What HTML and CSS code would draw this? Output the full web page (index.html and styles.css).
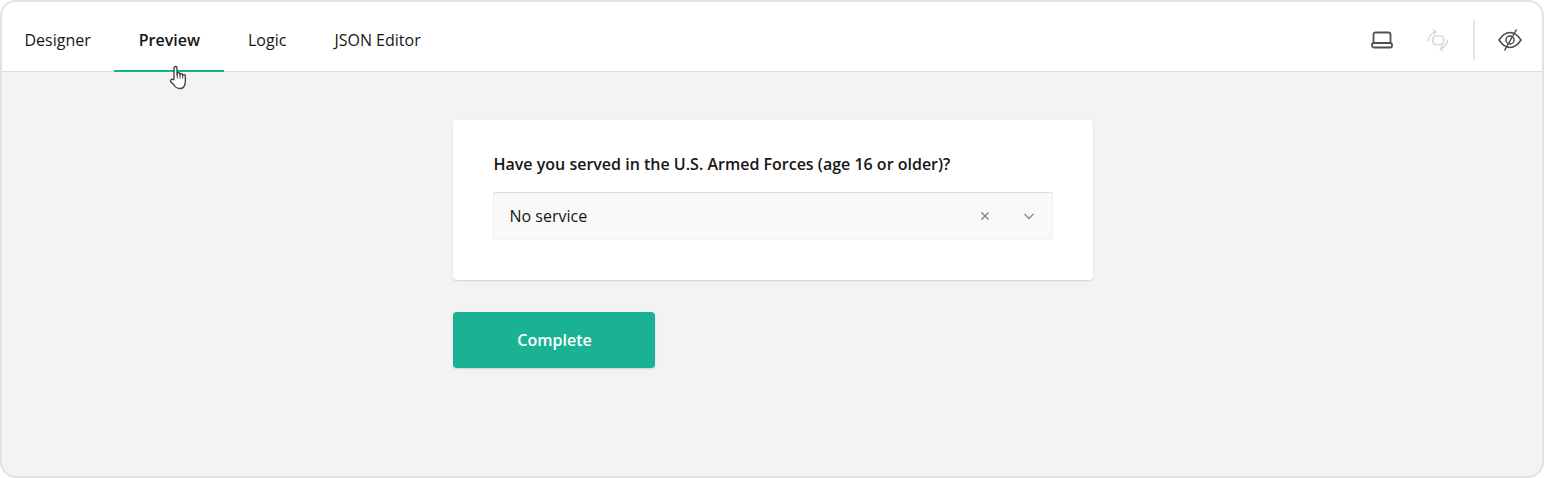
FILE: index.html
```html
<!DOCTYPE html>
<html lang="en">
<head>
  <meta charset="UTF-8" />
  <title>Survey Creator</title>
  <link rel="stylesheet" href="styles.css">
</head>
<body>
  <div class="creator">
    <header class="topbar">
      <nav class="tabs">
        <a class="tab">Designer</a>
        <a class="tab active">Preview</a>
        <a class="tab">Logic</a>
        <a class="tab">JSON Editor</a>
      </nav>
      <div class="tools">
        <button class="tool">
          <svg width="24" height="24" viewBox="0 0 24 24" fill="none" stroke="#505050" stroke-width="1.800">
            <path d="M3.500 15V6.500a2 2 0 0 1 2-2h13a2 2 0 0 1 2 2V15"/>
            <rect x="2" y="15" width="20" height="4.500" rx="1.800"/>
          </svg>
        </button>
        <button class="tool">
          <svg width="24" height="24" viewBox="0 0 24 24" fill="none" stroke="#d9d9d9" stroke-width="1.700">
            <rect x="7" y="8" width="10.500" height="8.500" rx="2.500"/>
            <path d="M2.500 13c0-4.500 3-8 7-9M21.500 11.500c0 4.500-3 8-7 9"/>
            <path d="M7 1.500L9.500 4 7.500 6.500M17 23l-2.500-2.500 2-2.500"/>
          </svg>
        </button>
        <span class="divider"></span>
        <button class="tool">
          <svg width="24" height="24" viewBox="0 0 24 24" fill="none" stroke="#4a4a4a" stroke-width="1.500">
            <path d="M1 12C4 7.500 7.600 4.500 12 4.500S20 7.500 23 12c-3 4.500-6.600 7.500-11 7.500S4 16.500 1 12z"/>
            <circle cx="12" cy="12" r="4"/>
            <path d="M18.500 1.500L6.500 22.500"/>
          </svg>
        </button>
      </div>
    </header>

    <!-- hand pointer from the capture -->
    <svg class="pointer" width="20" height="26" viewBox="0 0 20 26" fill="#fff" stroke="#3d3d3d" stroke-width="1.300" stroke-linejoin="round">
      <path d="M5 14V3a1.500 1.500 0 0 1 3 0v7l.3-1.200a1.300 1.300 0 0 1 2.600.200V10l.2-.6a1.300 1.300 0 0 1 2.500.300v1l.3-.4a1.200 1.200 0 0 1 2.300.500c.3 3 .3 6-.2 8.200-.5 2.500-2.300 4.500-5 4.500-3 0-4.500-1-6-3.500L1.600 16.500c-.8-1.300 1.200-3 2.400-1.800z"/>
      <path d="M8.300 9.500v4M11 10v3.500M13.700 10.500v3" fill="none" stroke-width="1"/>
    </svg>

    <main class="preview">
      <div class="page">
        <section class="question">
          <h5 class="question-title">Have you served in the U.S. Armed Forces (age 16 or older)?</h5>
          <div class="dropdown">
            <span class="dropdown-value">No service</span>
            <svg class="clear-icon" width="16" height="16" viewBox="0 0 16 16" fill="none" stroke="#7f7f7f" stroke-width="1.400">
              <path d="M4.500 4.500l7 7M11.500 4.500l-7 7"/>
            </svg>
            <svg class="arrow-icon" width="16" height="16" viewBox="0 0 16 16" fill="none" stroke="#8a8a8a" stroke-width="1.400">
              <path d="M3.500 6l4.500 4.500L12.500 6"/>
            </svg>
          </div>
        </section>
        <button class="complete">Complete</button>
      </div>
    </main>
  </div>
</body>
</html>
```

FILE: styles.css
```css
:root {
  --green: #19b394;
  --grey: #f3f3f3;
  --line: #dcdcdc;
  --text: #161616;
}

* {
  box-sizing: border-box;
}

html, body {
  height: 100%;
}

body {
  margin: 0;
  font-family: 'Open Sans', sans-serif;
  font-size: 16px;
  color: var(--text);
  background: #fff;
  overflow: hidden;
}

.creator {
  position: relative;
  height: 478px;
  display: flex;
  flex-direction: column;
  border: 2px solid #e2e2e2;
  border-radius: 16px;
  overflow: hidden;
  background: var(--grey);
}

.topbar {
  height: 70px;
  flex-shrink: 0;
  display: flex;
  align-items: stretch;
  justify-content: space-between;
  background: #fff;
  box-shadow: inset 0 -1px 0 var(--line);
}

.tabs {
  display: flex;
}

.tab {
  display: flex;
  align-items: center;
  padding: 6px 24px 0;
  line-height: 24px;
}

.tab:first-child {
  padding: 6px 23.500px 0 22.500px;
}

.tab.active {
  padding-left: 24.500px;
  font-weight: 600;
  box-shadow: inset 0 -2px 0 var(--green);
}

.tools {
  display: flex;
  align-items: center;
  gap: 8px;
  padding: 6px 8px 0 0;
}

.tool {
  width: 48px;
  height: 48px;
  padding: 0;
  border: none;
  background: none;
  display: flex;
  align-items: center;
  justify-content: center;
}

.divider {
  width: 2px;
  height: 40px;
  margin: 0 3px;
  background: #e6e6e6;
}

.pointer {
  position: absolute;
  left: 167px;
  top: 63px;
}

.preview {
  flex: 1;
  display: flex;
  justify-content: center;
  padding: 48px 0 0 2px;
}

.page {
  width: 640px;
}

.question {
  height: 160px;
  padding: 32px 40px 40px;
  background: #fff;
  border-radius: 4px;
  box-shadow: 0 1px 2px rgba(0, 0, 0, 0.15);
}

.question-title {
  margin: 0 0 16px;
  padding-left: 0.5px;
  font-size: 16px;
  font-weight: 600;
  line-height: 24px;
}

.dropdown {
  height: 48px;
  display: flex;
  align-items: center;
  padding: 0 16.500px;
  background: #f9f9f9;
  border-radius: 3px;
  box-shadow: inset 0 1px 1px rgba(0, 0, 0, 0.1), inset 0 0 0 1px #f3f3f3;
}

.dropdown-value {
  flex: 1;
}

.clear-icon {
  margin-right: 28px;
}

.complete {
  display: block;
  width: 202px;
  height: 56px;
  margin-top: 32px;
  padding-left: 7px;
  border: none;
  border-radius: 4px;
  background: var(--green);
  color: #fff;
  font-family: inherit;
  font-size: 16px;
  font-weight: 600;
  box-shadow: 0 1px 2px rgba(0, 0, 0, 0.15);
}
```
